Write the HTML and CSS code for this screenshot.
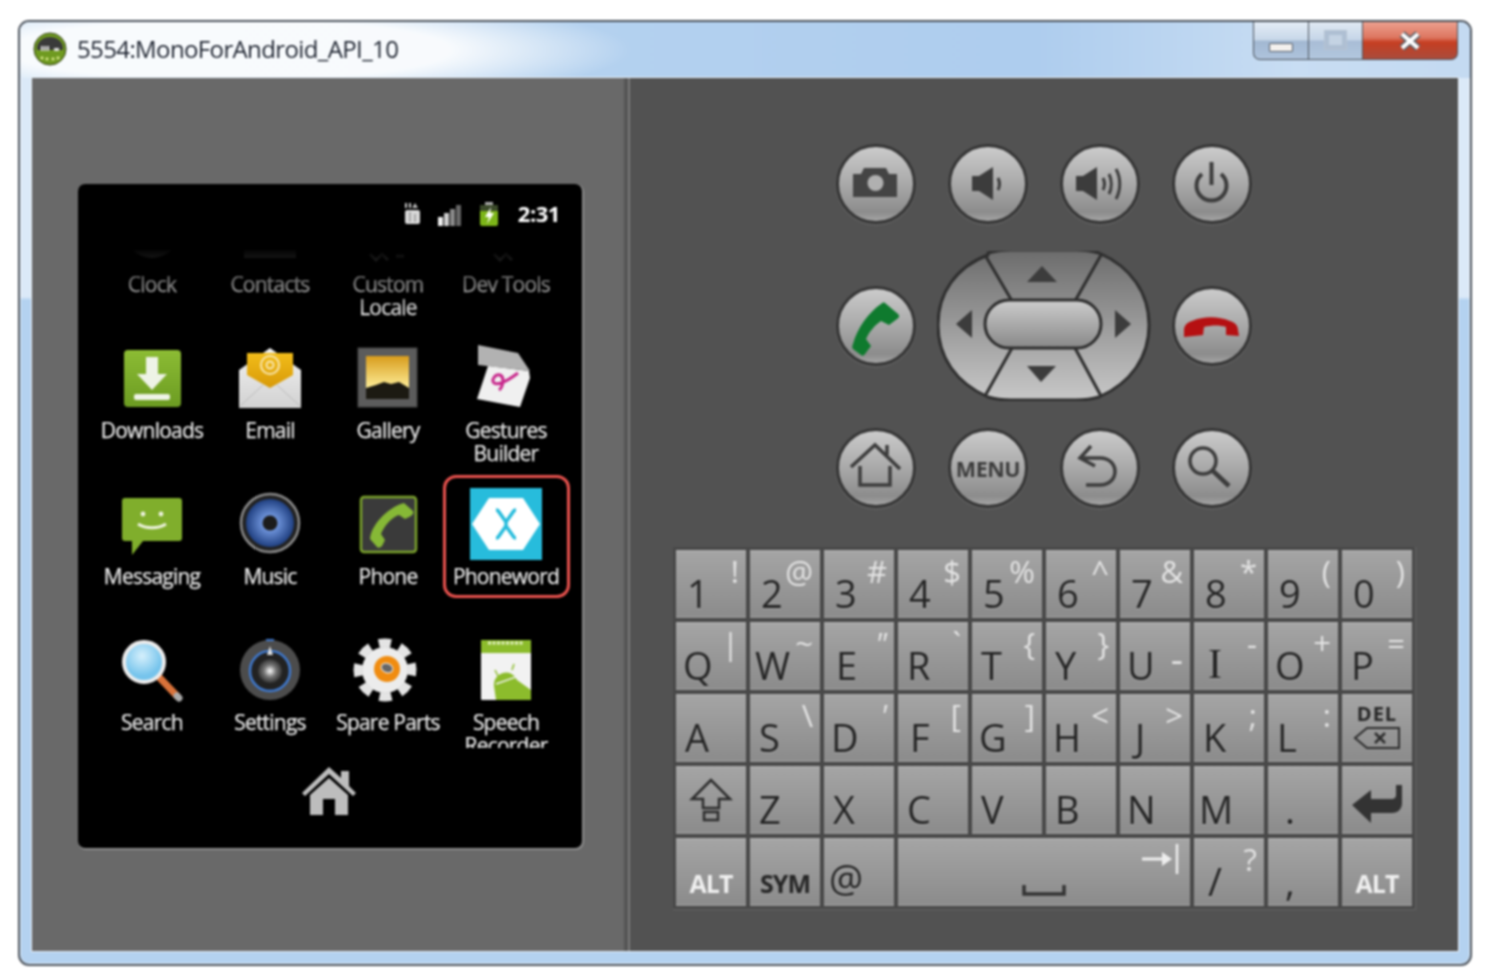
FILE: index.html
```html
<!DOCTYPE html>
<html lang="en">
<head>
<meta charset="utf-8">
<title>5554:MonoForAndroid_API_10</title>
<link rel="stylesheet" href="styles.css">
</head>
<body>
<div class="window">
  <header class="titlebar">
    <svg class="app-icon" viewBox="0 0 34 34" width="34" height="34">
      <circle cx="17" cy="17" r="16" fill="#6f9a20" stroke="#2d3a10"/>
      <path d="M4 16a13 11 0 0 1 26 0v2H4z" fill="#3a3a3a"/>
      <rect x="8" y="14" width="2" height="5" fill="#ddd"/><rect x="11" y="14" width="2" height="5" fill="#ddd"/><rect x="14" y="14" width="2" height="5" fill="#ddd"/><rect x="21" y="16" width="5" height="3" fill="#ddd"/>
      <circle cx="9" cy="26" r="1.4" fill="#e0ef90"/><circle cx="14" cy="27" r="1.4" fill="#e0ef90"/><circle cx="20" cy="27" r="1.4" fill="#e0ef90"/><circle cx="25" cy="26" r="1.4" fill="#e0ef90"/>
    </svg>
    <h1 class="title">5554:MonoForAndroid_API_10</h1>
    <div class="controls">
      <div class="ctl ctl-min"><span class="min-glyph"></span></div>
      <div class="ctl ctl-max"><span class="max-glyph"></span></div>
      <div class="ctl ctl-close">
        <svg viewBox="0 0 24 20" width="24" height="20"><path d="M4 3l16 14M20 3L4 17" stroke="#5a6068" stroke-width="7.500" fill="none"/><path d="M4 3l16 14M20 3L4 17" stroke="#fff" stroke-width="4" fill="none"/></svg>
      </div>
    </div>
  </header>

  <main class="client">
    <section class="left">
      <div class="phone">
        <div class="status">
          <svg viewBox="0 0 18 24" width="18" height="24"><path d="M3 2v5M7 2v5" stroke="#ccc" stroke-width="2"/><path d="M12 2l3 5h-6z" fill="#bbb"/><rect x="2" y="9" width="15" height="14" rx="2" fill="#d8d8d8"/><path d="M7 11v10M12 13v8" stroke="#777"/></svg>
          <svg class="sig" viewBox="0 0 25 22" width="25" height="22"><rect x="0" y="13" width="5" height="9" fill="#eee"/><rect x="6" y="9" width="5" height="13" fill="#ccc"/><rect x="12" y="5" width="5" height="17" fill="#888"/><rect x="18" y="1" width="5" height="21" fill="#666"/></svg>
          <svg class="bat" viewBox="0 0 20 24" width="20" height="24"><rect x="6" y="0" width="8" height="3" fill="#aaa"/><rect x="1" y="3" width="18" height="21" rx="2" fill="#7cb518"/><rect x="1" y="3" width="18" height="6" fill="#3b4a2a"/><path d="M12 5l-6 10h4l-2 7 7-11h-4z" fill="#fff"/></svg>
          <span class="time">2:31</span>
        </div>
        <div class="apps-clip">
          <div class="apps">
            <div class="app"><svg class="ico" viewBox="0 0 76 76"><circle cx="38" cy="36" r="28" fill="#888"/></svg><div class="label">Clock</div></div>
            <div class="app"><svg class="ico" viewBox="0 0 76 76"><rect x="12" y="10" width="52" height="54" fill="#888"/></svg><div class="label">Contacts</div></div>
            <div class="app"><svg class="ico" viewBox="0 0 76 76"><path d="M20 60l6 6 6-6 6 6M46 62h8" stroke="#888" stroke-width="3" fill="none"/></svg><div class="label">Custom<br>Locale</div></div>
            <div class="app"><svg class="ico" viewBox="0 0 76 76"><path d="M26 60l6 6 6-6 6 6" stroke="#888" stroke-width="3" fill="none"/></svg><div class="label">Dev Tools</div></div>

            <div class="app">
              <svg class="ico" viewBox="0 0 76 76">
                <defs><linearGradient id="gDl" x1="0" y1="0" x2="0" y2="1"><stop offset="0" stop-color="#8cbc34"/><stop offset="1" stop-color="#6c9c22"/></linearGradient></defs>
                <rect x="10" y="10" width="57" height="57" rx="4" fill="url(#gDl)"/>
                <path d="M32 17h12v17h9L38 50 23 34h9z" fill="#eef3e6"/><rect x="20" y="54" width="36" height="6" rx="2" fill="#eef3e6"/>
              </svg>
              <div class="label">Downloads</div>
            </div>
            <div class="app">
              <svg class="ico" viewBox="0 0 76 76">
                <defs><linearGradient id="gEm" x1="0" y1="0" x2="0" y2="1"><stop offset="0" stop-color="#f2f2f2"/><stop offset="1" stop-color="#d2d2d2"/></linearGradient><linearGradient id="gEy" x1="0" y1="0" x2="0" y2="1"><stop offset="0" stop-color="#f2bd1a"/><stop offset="1" stop-color="#d89a08"/></linearGradient></defs>
                <path d="M7 30l31-22 31 22v38H7z" fill="url(#gEm)"/>
                <path d="M15 13h46v22L38 48 15 35z" fill="url(#gEy)"/>
                <circle cx="38" cy="25" r="9" fill="none" stroke="#f8e6b0" stroke-width="2"/><circle cx="38" cy="25" r="3.5" fill="none" stroke="#f8e6b0" stroke-width="2"/>
                <path d="M7 67l24-22M69 67L45 45" stroke="#bbb"/>
              </svg>
              <div class="label">Email</div>
            </div>
            <div class="app">
              <svg class="ico" viewBox="0 0 76 76">
                <defs><linearGradient id="gGa" x1="0" y1="0" x2="0" y2="1"><stop offset="0" stop-color="#d89c1c"/><stop offset=".7" stop-color="#fbe890"/></linearGradient></defs>
                <rect x="8" y="8" width="59" height="59" fill="#5c5c5c" stroke="#444"/>
                <rect x="16" y="16" width="43" height="43" fill="url(#gGa)"/>
                <path d="M16 48l10-3 8-3 7 2 8-2 10 6v11H16z" fill="#1c1a12"/>
              </svg>
              <div class="label">Gallery</div>
            </div>
            <div class="app">
              <svg class="ico" viewBox="0 0 76 76">
                <path d="M10 5l40 8 12 18-52-6z" fill="#b2b2b2"/>
                <path d="M20 26l41 5 1 7-10 29-43-8z" fill="#f0f0f0"/>
                <path d="M50 33c-8 6-19 13-24 10-3-3 1-9 6-8 5 2 3 12-1 15" fill="none" stroke="#c8288c" stroke-width="3"/>
              </svg>
              <div class="label">Gestures<br>Builder</div>
            </div>

            <div class="app">
              <svg class="ico" viewBox="0 0 76 76">
                <path d="M11 12h54a3 3 0 0 1 3 3v37a3 3 0 0 1-3 3H29l-11 14V55h-7a3 3 0 0 1-3-3V15a3 3 0 0 1 3-3z" fill="#80ae2c"/>
                <circle cx="29" cy="28" r="2.4" fill="#eef3e0"/><circle cx="47" cy="28" r="2.4" fill="#eef3e0"/>
                <path d="M24 38c8 5 20 5 28 0" stroke="#eef3e0" stroke-width="3" fill="none"/>
              </svg>
              <div class="label">Messaging</div>
            </div>
            <div class="app">
              <svg class="ico" viewBox="0 0 76 76">
                <defs><radialGradient id="gMu"><stop offset=".2" stop-color="#7aa0e8"/><stop offset="1" stop-color="#1f3f80"/></radialGradient></defs>
                <circle cx="38" cy="37" r="29" fill="#222" stroke="#8a8a8a" stroke-width="2.5"/>
                <circle cx="38" cy="37" r="24" fill="url(#gMu)"/>
                <circle cx="38" cy="37" r="7.5" fill="#1c1c1c"/>
              </svg>
              <div class="label">Music</div>
            </div>
            <div class="app">
              <svg class="ico" viewBox="0 0 76 76">
                <rect x="11" y="11" width="55" height="55" rx="3" fill="#3a3a3a" stroke="#7ca42c" stroke-width="2.5"/>
                <path d="M54 17l9 8c1 2 0 3-2 5l-6 3-6-4c-7 2-15 11-18 19l4 6-3 6c-2 2-4 2-5 1l-7-8c1-14 18-32 34-36z" fill="#86b836"/>
              </svg>
              <div class="label">Phone</div>
            </div>
            <div class="app app-marked">
              <svg class="ico" viewBox="0 0 76 76">
                <rect x="2" y="2" width="72" height="72" fill="#27bcdc"/>
                <path d="M21 12h34l17 26-17 26H21L4 38z" fill="#fff"/>
                <path d="M28 24c1 0 2 0 3 2l7 10 7-10c1-2 2-2 3-2M28 52c1 0 2 0 3-2l7-10 7 10c1 2 2 2 3 2M38 35v6" stroke="#27bcdc" stroke-width="3.500" fill="none"/>
              </svg>
              <div class="label">Phoneword</div>
            </div>

            <div class="app">
              <svg class="ico" viewBox="0 0 76 76">
                <defs><radialGradient id="gSe" cx=".45" cy=".35"><stop offset="0" stop-color="#d6f0fc"/><stop offset="1" stop-color="#76c4ec"/></radialGradient></defs>
                <path d="M44 44l19 20" stroke="#d8723a" stroke-width="7" stroke-linecap="round"/><path d="M63 64l2 2" stroke="#aaa" stroke-width="7" stroke-linecap="round"/>
                <circle cx="30" cy="30" r="20" fill="url(#gSe)" stroke="#ececec" stroke-width="4"/>
              </svg>
              <div class="label">Search</div>
            </div>
            <div class="app">
              <svg class="ico" viewBox="0 0 76 76">
                <defs><radialGradient id="gSt"><stop offset="0" stop-color="#fff"/><stop offset=".5" stop-color="#777"/><stop offset="1" stop-color="#333"/></radialGradient></defs>
                <circle cx="38" cy="38" r="30" fill="#4c4c4c"/>
                <circle cx="38" cy="39" r="20" fill="#222" stroke="#3f78cc" stroke-width="2.5"/>
                <circle cx="38" cy="39" r="12" fill="url(#gSt)"/>
                <path d="M38 14l3 9h-6z" fill="#ddd"/><path d="M34 8h8" stroke="#3f78cc" stroke-width="2"/>
              </svg>
              <div class="label">Settings</div>
            </div>
            <div class="app">
              <svg class="ico" viewBox="0 0 76 76">
                <circle cx="35" cy="38" r="23" fill="#ececec"/>
                <circle cx="35" cy="38" r="27" fill="none" stroke="#e4e4e4" stroke-width="9" stroke-dasharray="12 9.200" transform="rotate(-14 35 38)"/>
                <circle cx="37" cy="37" r="13" fill="#f08c10"/><ellipse cx="37" cy="36" rx="6" ry="4.5" fill="#666" stroke="#eee" transform="rotate(20 37 36)"/>
              </svg>
              <div class="label">Spare Parts</div>
            </div>
            <div class="app">
              <svg class="ico" viewBox="0 0 76 76">
                <rect x="13" y="8" width="50" height="60" rx="1" fill="#f2f2f2"/>
                <path d="M13 9a1 1 0 0 1 1-1h48a1 1 0 0 1 1 1v12H13z" fill="#8cbc2c"/>
                <path d="M20 11h36" stroke="#e4f0c4" stroke-width="3" stroke-dasharray="3 1.500"/>
                <path d="M28 68l-2-14a12 12 0 0 1 23-6l14 10v10z" fill="#8cbc2c"/><path d="M30 44l-3-6M44 38l2-6" stroke="#8cbc2c" stroke-width="1.500"/>
                <path d="M28 52l34-12" stroke="#f2f2f2" stroke-width="1.500"/>
              </svg>
              <div class="label">Speech<br>Recorder</div>
            </div>
          </div>
        </div>
        <div class="home-row">
          <svg viewBox="0 0 56 50" width="56" height="50"><path d="M1 27L28 1l12 11V5h8v15l7 7-3 3L28 8 4 30z" fill="#bdbdbd"/><path d="M9 29L28 12l19 17v20H34V33H22v16H9z" fill="#bdbdbd"/></svg>
        </div>
      </div>
    </section>

    <div class="divider"></div>

    <section class="right">
      <div class="pad">
        <div class="pad-row">
          <div class="btn"><svg viewBox="0 0 78 78"><path d="M16 29h8l3-6h22l3 6h8v23H16z" fill="#444"/><circle cx="38.500" cy="38" r="8" fill="#b0b0b0"/></svg></div>
          <div class="btn"><svg viewBox="0 0 78 78"><path d="M23 31h7l14-9v33l-14-9h-7z" fill="#3c3c3c"/><path d="M49 33c2 4 2 8 0 12" stroke="#3c3c3c" stroke-width="3" fill="none"/></svg></div>
          <div class="btn"><svg viewBox="0 0 78 78"><path d="M15 31h7l14-9v33l-14-9h-7z" fill="#3c3c3c"/><path d="M42 33c2 4 2 8 0 12M48 29c3 6 3 14 0 20M55 24c5 9 5 21 0 30" stroke="#3c3c3c" stroke-width="3" fill="none"/></svg></div>
          <div class="btn"><svg viewBox="0 0 78 78"><path d="M29 29a15 15 0 1 0 19 0" stroke="#3c3c3c" stroke-width="4" fill="none"/><path d="M38.500 17v23" stroke="#3c3c3c" stroke-width="4"/></svg></div>
        </div>
        <div class="pad-row pad-row-tall">
          <div class="btn"><svg viewBox="0 0 78 78"><path d="M48 16l13 11c2 2 1 4-1 5l-8 6-8-4c-6 4-12 11-15 18l5 7-6 8c-1 2-3 2-4 1l-8-6c-1-1-1-3 0-5 4-16 16-32 28-40 1-1 3-2 4-1z" fill="#0f7a2e"/></svg></div>
          <svg class="dpad" viewBox="1 0 214 150" width="214" height="150">
            <defs>
              <linearGradient id="gDp" x1="0" y1="0" x2="0" y2="1"><stop offset="0" stop-color="#6c6c6c"/><stop offset="1" stop-color="#c8c8c8"/></linearGradient>
              <linearGradient id="gPi" x1="0" y1="0" x2="0" y2="1"><stop offset="0" stop-color="#cdcdcd"/><stop offset="1" stop-color="#888"/></linearGradient>
            </defs>
            <path d="M52 4C20 16 2 42 2 74s18 58 50 72q10 3 23 3h65q13 0 23-3c32-14 50-40 50-72s-18-58-50-72q-10-3-23-3H75q-13 0-23 3z" fill="url(#gDp)" stroke="#2e2e2e" stroke-width="3"/>
            <path d="M49 4l27 46M165 4l-26 46M76 97l-27 48M139 97l26 48" stroke="#2e2e2e" stroke-width="3"/>
            <rect x="49" y="49" width="116" height="48" rx="24" fill="url(#gPi)" stroke="#2e2e2e" stroke-width="3"/>
            <path d="M106 15l15 16H91zM91 115h29l-15 16zM36 59v28L20 73zM179 59l16 14-16 14z" fill="#3c3c3c"/>
          </svg>
          <div class="btn"><svg viewBox="0 0 78 78"><path d="M11 43c0-5 4-8 8-9 12-5 26-5 38 0 4 1 8 4 8 9l1 6-13-1v-8c-6-2-14-2-22 0l-1 8-19 2z" fill="#b51012"/></svg></div>
        </div>
        <div class="pad-row">
          <div class="btn"><svg viewBox="0 0 78 78"><path d="M14 38l24-22 25 24M50 26v-10" stroke="#3c3c3c" stroke-width="3.500" fill="none"/><path d="M23 37v19h30V37" stroke="#3c3c3c" stroke-width="3.500" fill="none"/></svg></div>
          <div class="btn"><span class="menu-text">MENU</span></div>
          <div class="btn"><svg viewBox="0 0 78 78"><path d="M30 17L19 29l15 8M19 29h20c20 0 20 27 0 27H25" stroke="#3c3c3c" stroke-width="3.500" fill="none"/></svg></div>
          <div class="btn"><svg viewBox="0 0 78 78"><circle cx="30" cy="32" r="13" stroke="#3c3c3c" stroke-width="3.500" fill="none"/><path d="M40 42l16 15" stroke="#3c3c3c" stroke-width="4.500"/></svg></div>
        </div>
      </div>

      <div class="keyboard">
        <div class="key"><span class="main">1</span><span class="alt">!</span></div>
        <div class="key"><span class="main">2</span><span class="alt">@</span></div>
        <div class="key"><span class="main">3</span><span class="alt">#</span></div>
        <div class="key"><span class="main">4</span><span class="alt">$</span></div>
        <div class="key"><span class="main">5</span><span class="alt">%</span></div>
        <div class="key"><span class="main">6</span><span class="alt">^</span></div>
        <div class="key"><span class="main">7</span><span class="alt">&amp;</span></div>
        <div class="key"><span class="main">8</span><span class="alt">*</span></div>
        <div class="key"><span class="main">9</span><span class="alt">(</span></div>
        <div class="key"><span class="main">0</span><span class="alt">)</span></div>

        <div class="key"><span class="main shift-l">Q</span><span class="alt">|</span></div>
        <div class="key"><span class="main shift-ll">W</span><span class="alt">~</span></div>
        <div class="key"><span class="main shift-r">E</span><span class="alt alt-it">"</span></div>
        <div class="key"><span class="main">R</span><span class="alt">`</span></div>
        <div class="key"><span class="main">T</span><span class="alt">{</span></div>
        <div class="key"><span class="main">Y</span><span class="alt">}</span></div>
        <div class="key"><span class="main shift-l">U</span><span class="alt alt-low">-</span></div>
        <div class="key"><span class="main main-i">I</span><span class="alt">-</span></div>
        <div class="key"><span class="main shift-l">O</span><span class="alt">+</span></div>
        <div class="key"><span class="main">P</span><span class="alt">=</span></div>

        <div class="key"><span class="main">A</span></div>
        <div class="key"><span class="main">S</span><span class="alt">\</span></div>
        <div class="key"><span class="main shift-l">D</span><span class="alt alt-it">'</span></div>
        <div class="key"><span class="main shift-r">F</span><span class="alt">[</span></div>
        <div class="key"><span class="main shift-l">G</span><span class="alt">]</span></div>
        <div class="key"><span class="main shift-l">H</span><span class="alt">&lt;</span></div>
        <div class="key"><span class="main shift-j">J</span><span class="alt">&gt;</span></div>
        <div class="key"><span class="main">K</span><span class="alt">;</span></div>
        <div class="key"><span class="main">L</span><span class="alt">:</span></div>
        <div class="key key-del">
          <span class="del-text">DEL</span>
          <svg viewBox="0 0 48 24" width="48" height="24"><path d="M46 2H14L2 12l12 10h32z" fill="none" stroke="#2c2c2c" stroke-width="2"/><path d="M22 7l10 10M32 7L22 17" stroke="#2c2c2c" stroke-width="2.500"/></svg>
        </div>

        <div class="key key-icon"><svg viewBox="0 0 44 44" width="44" height="44"><path d="M22 2L3 21h11v9h16v-9h11z" fill="none" stroke="#2c2c2c" stroke-width="2.500"/><rect x="15" y="34" width="14" height="8" fill="none" stroke="#2c2c2c" stroke-width="2.500"/></svg></div>
        <div class="key"><span class="main">Z</span></div>
        <div class="key"><span class="main">X</span></div>
        <div class="key"><span class="main">C</span></div>
        <div class="key"><span class="main">V</span></div>
        <div class="key"><span class="main">B</span></div>
        <div class="key"><span class="main shift-l">N</span></div>
        <div class="key"><span class="main shift-ll">M</span></div>
        <div class="key key-dot"><span class="main">.</span></div>
        <div class="key key-icon key-enter"><svg viewBox="0 0 52 40" width="52" height="40"><path d="M1 20L20 5v9h20c4 0 5-2 5-4V0h6v18c0 6-4 10-10 10H20v10z" fill="#333"/></svg></div>

        <div class="key key-mod"><span class="mod mod-light">ALT</span></div>
        <div class="key key-mod"><span class="mod">SYM</span></div>
        <div class="key"><span class="main main-at">@</span></div>
        <div class="key key-space">
          <svg class="tab-glyph" viewBox="0 0 38 30" width="38" height="30"><path d="M0 15h27" stroke="#eee" stroke-width="3"/><path d="M20 8l10 7-10 7z" fill="#eee"/><path d="M35 0v30" stroke="#eee" stroke-width="2.500"/></svg>
          <svg class="space-glyph" viewBox="0 0 44 12" width="44" height="12"><path d="M2 0v9h40V0" fill="none" stroke="#333" stroke-width="3.500"/></svg>
        </div>
        <div class="key"><span class="main main-slash">/</span><span class="alt">?</span></div>
        <div class="key key-dot"><span class="main">,</span></div>
        <div class="key key-mod"><span class="mod mod-light">ALT</span></div>
      </div>
    </section>
  </main>
</div>
</body>
</html>
```
FILE: styles.css
```css
*, *::after { box-sizing: border-box; }
html, body { margin: 0; height: 978px; overflow: hidden; background: #fff; }
body { padding: 20px 0 0 18px; font-family: "Open Sans", "Noto Sans", sans-serif; }

.window {
  width: 1454px;
  height: 946px;
  padding: 0 12px 13px;
  display: flex;
  flex-direction: column;
  border: 2px solid #4c535c;
  border-radius: 11px;
  background: linear-gradient(#dbe9f8 0, #dbe9f8 275px, #b4d2f0 278px);
  filter: blur(.8px);
  box-shadow: inset 0 0 0 1px rgba(255,255,255,.55);
}

.titlebar {
  height: 56px;
  margin: 0 -12px;
  padding: 0 12px 0 14px;
  display: flex;
  align-items: flex-start;
  border-radius: 9px 9px 0 0;
  background:
    radial-gradient(ellipse 400px 55px at 210px 28px, rgba(255,255,255,.9) 55%, rgba(255,255,255,0) 100%),
    linear-gradient(90deg, #bcd7f1 0, #aecdee 70%, #c8ddf3 88%, #c4daf1 100%);
}
.app-icon { margin: 10px 0 0 -1px; flex: none; }
.title {
  margin: 10px 0 0 10px;
  font-size: 24px;
  line-height: 34px;
  font-weight: 400;
  color: #1e2430;
  letter-spacing: -.62px;
  white-space: nowrap;
}
.controls { margin-left: auto; display: flex; height: 38px; }
.ctl {
  display: flex;
  align-items: center;
  justify-content: center;
  border: 1px solid #4c535c;
  border-top: 0;
  border-left-width: 0;
}
.ctl-min {
  width: 56px;
  border-left-width: 1px;
  border-radius: 0 0 0 7px;
  padding-top: 14px;
  background: linear-gradient(#e3ecf6 0, #c8d8e9 48%, #a2b8d2 52%, #aec3dc 100%);
}
.ctl-max {
  width: 54px;
  padding-bottom: 2px;
  background: linear-gradient(#e0e9f3 0, #c6d6e8 48%, #a9bdd6 52%, #b2c7de 100%);
}
.ctl-close {
  width: 95px;
  border-radius: 0 0 7px 0;
  background: linear-gradient(#eda08f 0, #dd7660 42%, #c63e22 55%, #a94c3c 100%);
}
.min-glyph { width: 24px; height: 9px; background: #f4f1ee; border: 1.5px solid #555e6a; border-radius: 1px; }
.max-glyph { width: 23px; height: 20px; border: 1.5px solid #b6c3d2; background: #c4d3e3; box-shadow: inset 0 0 0 4px #aebfd3; }

.client {
  flex: 1;
  display: flex;
  min-height: 0;
  box-shadow: 0 0 0 1px #e8f0f8;
}
.left { width: 592px; background: #696969; padding: 106px 0 0 46px; }
.divider { width: 6px; background: linear-gradient(90deg, #555 0, #555 4px, #7a7a7a 4px, #7a7a7a 6px); }
.right {
  flex: 1;
  background: #525252;
  padding-top: 66px;
  display: flex;
  flex-direction: column;
  align-items: center;
}

.phone {
  width: 504px;
  height: 664px;
  background: #000;
  border-radius: 7px;
  box-shadow: 1px 1px 0 1px #8a8a8a;
  display: flex;
  flex-direction: column;
  overflow: hidden;
}
.status {
  height: 66px;
  padding: 17px 22px 0 0;
  display: flex;
  justify-content: flex-end;
  align-items: flex-start;
}
.sig { margin: 3px 0 0 17px; }
.bat { margin: 1px 0 0 16px; }
.time { margin-left: 19px; font-size: 22px; line-height: 25px; font-weight: 700; color: #fff; letter-spacing: -.45px; }

.apps-clip {
  height: 498px;
  overflow: hidden;
  -webkit-mask-image: linear-gradient(rgba(0,0,0,.03) 0, #000 66px);
  mask-image: linear-gradient(rgba(0,0,0,.03) 0, #000 66px);
}
.apps {
  margin: -56px 0 0 15px;
  display: grid;
  grid-template-columns: repeat(4, 118px);
  grid-auto-rows: 146px;
}
.app { position: relative; display: flex; flex-direction: column; align-items: center; }
.ico { width: 76px; height: 76px; flex: none; }
.label {
  margin-top: 3px;
  font-size: 21px;
  line-height: 23px;
  color: #e8e8e8;
  text-align: center;
  white-space: nowrap;
  letter-spacing: -.78px;
  -webkit-text-stroke: .25px #e8e8e8;
}
.app-marked::after {
  content: "";
  position: absolute;
  left: -4px;
  top: -11px;
  width: 127px;
  height: 123px;
  border: 3px solid #e9524e;
  border-radius: 13px;
}
.home-row { flex: 1; display: flex; justify-content: center; padding-top: 18px; }
.home-row svg { margin-left: -2px; }

.pad { width: 416px; display: flex; flex-direction: column; gap: 26px; }
.pad-row { display: flex; justify-content: space-between; align-items: center; }
.pad-row-tall { height: 152px; }
.btn {
  width: 80px;
  height: 80px;
  border-radius: 50%;
  display: flex;
  align-items: center;
  justify-content: center;
  background: linear-gradient(#cbcbcb 0, #a9a9a9 50%, #8c8c8c 88%, #a5a5a5 100%);
  border: 3px solid #353535;
  box-shadow: 0 1px 2px 0 #6a6a6a;
  overflow: hidden;
}
.btn svg { width: 78px; height: 78px; flex: none; }
.menu-text { font-size: 21.5px; font-weight: 700; color: #3c3c3c; letter-spacing: -.4px; }

.keyboard {
  margin: 39px 0 0 1px;
  padding: 3px;
  display: grid;
  grid-template-columns: repeat(10, 70px);
  grid-auto-rows: 68px;
  gap: 4px;
  background: #484848;
  border-right: 1px solid #666;
  border-bottom: 1px solid #666;
}
.key {
  display: flex;
  justify-content: space-between;
  align-items: flex-start;
  padding: 0 7px 0 9px;
  background: linear-gradient(#b0b0b0 0, #a4a4a4 4%, #8c8c8c 96%, #9a9a9a 100%);
  overflow: hidden;
}
.main {
  margin-top: 21px;
  font-size: 38px;
  line-height: 44px;
  color: #242424;
  text-shadow: 0 1px 0 rgba(255,255,255,.2);
}
.key:nth-child(-n+10) .main { margin-left: 2px; }
.shift-l { margin-left: -2px; }
.shift-ll { margin-left: -4px; }
.shift-r { margin-left: 3px; }
.shift-j { margin-left: 6px; }
.main-i { margin: 20px 0 0 5px; font-family: "Liberation Serif", serif; font-size: 42px; }
.alt {
  font-size: 31px;
  line-height: 42px;
  color: #e4e4e4;
}
.alt-it { font-style: italic; }
.alt-low { margin-top: 15px; font-size: 38px; }
.key-icon { justify-content: center; align-items: center; padding: 0; }
.key-enter { padding-top: 10px; }
.key-dot .main { margin-left: 8px; }
.key-mod { justify-content: center; align-items: flex-end; padding: 0 0 8px; }
.mod { font-size: 25px; line-height: 30px; font-weight: 700; color: #262626; letter-spacing: -1px; }
.mod-light { color: #f0f0f0; }
.main-at { margin: 18px 0 0 -4px; }
.main-slash { margin-left: 5px; }
.key-del { flex-direction: column; align-items: center; justify-content: flex-start; padding: 9px 0 0; gap: 1px; }
.del-text { font-size: 20px; line-height: 22px; font-weight: 700; color: #262626; letter-spacing: 1px; }
.key-space { grid-column: span 4; position: relative; }
.tab-glyph { position: absolute; right: 10px; top: 6px; }
.space-glyph { position: absolute; left: 124px; bottom: 9px; }
```
